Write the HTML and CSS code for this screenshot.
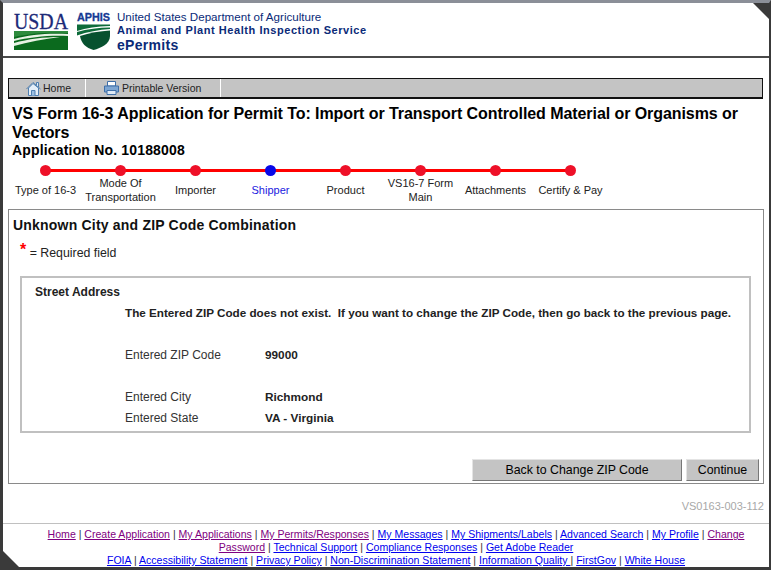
FILE: index.html
```html
<!DOCTYPE html>
<html lang="en">
<head>
<meta charset="utf-8">
<title>ePermits</title>
<link rel="stylesheet" href="styles.css">
</head>
<body>
<div class="window">
  <i class="corner corner-tr"></i>
  <i class="corner corner-bl"></i>
  <header class="banner">
    <svg class="usda" width="55" height="40" viewBox="0 0 55 40">
      <text x="0" y="18" class="usda-word" textLength="54" lengthAdjust="spacingAndGlyphs">USDA</text>
      <path d="M0 20H54V39H0Z" fill="#0b6a1e"/>
      <path d="M0 20H54V22C36 21 16 22 0 26Z" fill="#2e8b3d"/>
      <path d="M0 28C16 23 36 22 54 23V25C36 24 16 26 0 30ZM0 32C14 28 30 26 46 26C30 28 14 31 0 35Z" fill="#e8f2e4"/>
    </svg>
    <svg class="aphis" width="34" height="40" viewBox="0 0 34 40">
      <text x="0" y="10" class="aphis-word" textLength="33" lengthAdjust="spacingAndGlyphs">APHIS</text>
      <path d="M0 13.500H33V15C20 15.500 9 17 0 20ZM0 21C10 18 22 16.500 33 16.500V18C22 18.500 10 21 0 24.500Z" fill="#0d6b3a"/>
      <path d="M3 25C12 22 23 20 33 19.500V25C33 33 24 37 16.500 39C9 37 4 32 3 25Z" fill="#07512f"/>
    </svg>
    <div class="agency">
      <div class="agency-usda">United States Department of Agriculture</div>
      <div class="agency-aphis">Animal and Plant Health Inspection Service</div>
      <div class="agency-app">ePermits</div>
    </div>
  </header>

  <nav class="toolbar">
    <a class="tool tool-home">
      <svg width="15" height="15" viewBox="0 0 15 15"><path d="M.5 8 7 1.500 14.500 8" fill="none" stroke="#4f7fb0"/><path d="M10.500 4V1.500H12.500V6" fill="#dfeaf6" stroke="#4f7fb0"/><path d="M2.500 7 7 2.500 12.500 7V14.500H2.500Z" fill="#e4eef8" stroke="#4f7fb0"/><path d="M5.500 14.500V9.500H9V14.500" fill="#9cc0e2" stroke="#4f7fb0"/></svg>
      <span>Home</span>
    </a>
    <a class="tool tool-print">
      <svg width="15" height="14" viewBox="0 0 15 14"><path d="M3.500 .5H11.500V5H3.500Z" fill="#fff" stroke="#3f6fa8"/><path d="M.5 5H14.500V11H.5Z" fill="#7ea6d2" stroke="#3f6fa8"/><path d="M3 9.500H12V13.500H3Z" fill="#dfeaf6" stroke="#3f6fa8"/></svg>
      <span>Printable Version</span>
    </a>
    <div class="tool-fill"></div>
  </nav>

  <h1 class="title">VS Form 16-3 Application for Permit To: Import or Transport Controlled Material or Organisms or Vectors</h1>
  <div class="app-no">Application No. 10188008</div>

  <ol class="steps">
    <li class="step"><i class="dot"></i><span>Type of 16-3</span></li>
    <li class="step"><i class="dot"></i><span>Mode Of<br>Transportation</span></li>
    <li class="step"><i class="dot"></i><span>Importer</span></li>
    <li class="step step-current"><i class="dot"></i><span>Shipper</span></li>
    <li class="step"><i class="dot"></i><span>Product</span></li>
    <li class="step"><i class="dot"></i><span>VS16-7 Form<br>Main</span></li>
    <li class="step"><i class="dot"></i><span>Attachments</span></li>
    <li class="step step-last"><i class="dot"></i><span>Certify &amp; Pay</span></li>
  </ol>

  <main class="panel">
    <h2 class="panel-title">Unknown City and ZIP Code Combination</h2>
    <p class="required"><span class="star">*</span> = Required field</p>
    <section class="address">
      <h3 class="address-title">Street Address</h3>
      <p class="notice">The Entered ZIP Code does not exist.&nbsp; If you want to change the ZIP Code, then go back to the previous page.</p>
      <div class="field field-zip"><span class="label">Entered ZIP Code</span><b>99000</b></div>
      <div class="field field-city"><span class="label">Entered City</span><b>Richmond</b></div>
      <div class="field field-state"><span class="label">Entered State</span><b>VA - Virginia</b></div>
    </section>
    <div class="actions">
      <button class="btn btn-back" type="button">Back to Change ZIP Code</button>
      <button class="btn btn-continue" type="button">Continue</button>
    </div>
  </main>

  <div class="page-code">VS0163-003-112</div>

  <footer class="footer">
    <div class="footer-line"><a class="seen">Home</a> | <a class="seen">Create Application</a> | <a class="seen">My Applications</a> | <a class="seen">My Permits/Responses</a> | <a>My Messages</a> | <a>My Shipments/Labels</a> | <a>Advanced Search</a> | <a>My Profile</a> | <a class="seen">Change</a></div>
    <div class="footer-line"><a class="seen">Password</a> | <a>Technical Support</a> | <a>Compliance Responses</a> | <a>Get Adobe Reader</a></div>
    <div class="footer-line"><a>FOIA</a> | <a>Accessibility Statement</a> | <a>Privacy Policy</a> | <a>Non-Discrimination Statement</a> | <a>Information Quality </a> | <a>FirstGov</a> | <a>White House</a></div>
  </footer>
</div>
</body>
</html>
```
FILE: styles.css
```css
* { box-sizing: border-box; }
html, body { margin: 0; padding: 0; height: 100%; overflow: hidden; }
body { background: #fff; font-family: "Liberation Sans", Arial, sans-serif; color: #000; }
.window {
  position: relative;
  width: 771px; height: 570px; overflow: hidden;
  border-top: 3px solid #8b8f98;
  border-left: 3px solid #3a3a3a;
  border-bottom: 3px solid #3a3a3a;
  border-right: 2px solid #3a3a3a;
  background: #fff;
}
.corner { position: absolute; display: block; width: 16px; height: 16px; background: #3a3a3a; }
.corner-tr { top: 0; right: 0; clip-path: polygon(0 0, 100% 0, 100% 100%); }
.corner-bl { bottom: 0; left: 0; clip-path: polygon(0 0, 100% 100%, 0 100%); }
.banner {
  height: 55px; display: flex; align-items: flex-start;
  padding: 8px 0 0 11px;
  border-bottom: 2px solid #4a4a4a;
}
.usda-word { font: 400 24px "Liberation Serif", serif; fill: #1c2a78; stroke: #1c2a78; stroke-width: .3px; }
.aphis-word { font: 700 11px "Liberation Sans", sans-serif; fill: #163a94; stroke: #163a94; stroke-width: .3px; }
.usda { margin-right: 8px; display: block; overflow: visible; }
.aphis { margin-right: 6px; display: block; overflow: visible; }
.agency { color: #0a2a78; margin-top: -1px; }
.agency-usda { font-size: 11.600px; line-height: 13px; }
.agency-aphis { font-size: 11px; font-weight: 700; line-height: 14px; letter-spacing: .56px; }
.agency-app { font-size: 14px; font-weight: 700; line-height: 16px; letter-spacing: .3px; }

.toolbar {
  display: flex; height: 21px; margin: 20px 0 0 5px; width: 755px;
  border: solid #111; border-width: 1px 1px 2px 1px; background: #c4c4c4;
  font-size: 10.500px; color: #222;
}
.tool { display: flex; align-items: center; border-right: 1px solid #fff; height: 100%; }
.tool-home { width: 77px; padding-left: 17px; gap: 2px; }
.tool-print { width: 135px; padding-left: 18px; gap: 3px; }
.tool-fill { flex: 1; }

.title { margin: 5px 0 0 9px; font-size: 16px; line-height: 19px; font-weight: 700; width: 745px; letter-spacing: -.07px; }
.app-no { margin: 0 0 0 9px; font-size: 14px; line-height: 17px; font-weight: 700; letter-spacing: .17px; }

.steps { list-style: none; display: flex; margin: 6px 0 0 5px; padding: 0; height: 44px; }
.step { position: relative; width: 75px; text-align: center; font-size: 11px; color: #222; line-height: 14px; white-space: nowrap; }
.step::before { content: ""; position: absolute; top: 4px; left: 38px; width: 75px; height: 3px; background: #f00; }
.step-last::before { display: none; }
.dot { position: relative; display: block; width: 11px; height: 11px; margin: 0 auto; border-radius: 50%; background: #ee1028; }
.step span { display: flex; align-items: center; justify-content: center; height: 27px; }
.step-current { color: #1a1ae0; }
.step-current .dot { background: #0808e8; }

.panel { margin: 0 0 0 5px; width: 756px; height: 275px; border: 1px solid #8a8a8a; }
.panel-title { margin: 7px 0 0 4px; font-size: 14px; line-height: 16px; font-weight: 700; letter-spacing: .2px; color: #111; }
.required { margin: 11px 0 0 11px; font-size: 12.350px; line-height: 16px; color: #222; }
.star { color: #f00; font-size: 16px; font-weight: 700; position: relative; top: -2px; }
.address {
  margin: 15px 0 0 11px; width: 731px; height: 157px;
  border: 2px solid #c0c0c0; padding: 7px 0 0 13px;
}
.address-title { margin: 0; font-size: 12px; line-height: 15px; font-weight: 700; color: #222; }
.notice { margin: 6px 0 0 90px; font-size: 11.700px; line-height: 14px; font-weight: 700; color: #222; white-space: nowrap; }
.field { display: flex; margin-left: 90px; font-size: 12px; line-height: 15px; color: #333; }
.field b { font-size: 11.800px; color: #222; }
.label { width: 140px; }
.field-zip { margin-top: 28px; }
.field-city { margin-top: 27px; }
.field-state { margin-top: 6px; }
.actions { display: flex; justify-content: flex-end; gap: 4px; margin: 26px 4px 0 0; }
.btn {
  height: 22px; padding: 0; background: #c4c4c4; color: #000;
  font: 12.350px "Liberation Sans", sans-serif;
  border: 1px solid; border-color: #e4e4e4 #777 #777 #e4e4e4;
}
.btn-back { width: 210px; }
.btn-continue { width: 73px; }

.page-code { margin: 15px 5px 0 0; text-align: right; font-size: 11px; line-height: 14px; color: #a8a8a8; }
.footer { margin-top: 10px; border-top: 1px solid #c0c0c0; padding: 4px 0 0 20px; text-align: center; font-size: 10.550px; line-height: 13px; color: #333; white-space: nowrap; }
.footer a { color: #0000ee; text-decoration: underline; }
.footer a.seen { color: #800080; }
```
